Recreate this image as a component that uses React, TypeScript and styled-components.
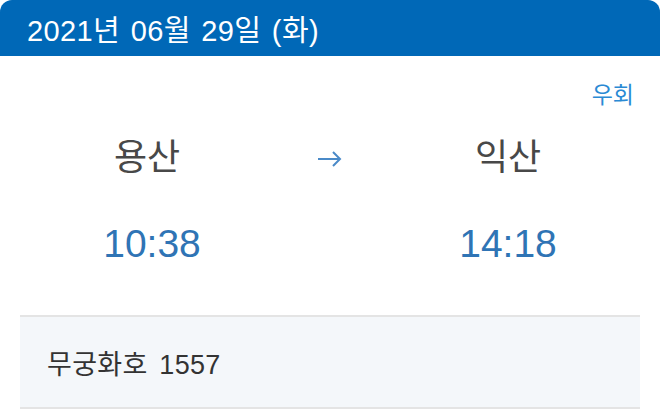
import styled, { createGlobalStyle } from 'styled-components';

const GlobalStyle = createGlobalStyle`
    html, body {
        margin: 0;
        padding: 0;
        background: #ffffff;
    }
    body {
        font-family: 'Liberation Sans', 'Noto Sans CJK KR', sans-serif;
    }
`;

const Card = styled.div`
    width: 660px;
    height: 410px;
    background: #ffffff;
    overflow: hidden;
`;

const DateBar = styled.div`
    height: 56px;
    background-color: #0068b7;
    border-radius: 12px 12px 0 0;
    display: flex;
    align-items: center;
    padding: 0 27px;
    color: #ffffff;
    font-size: 29px;
    letter-spacing: 0.4px;
    word-spacing: 2px;
`;

const Body = styled.div`
    padding: 0 20px;
`;

const DetourRow = styled.div`
    display: flex;
    justify-content: flex-end;
    padding: 22px 6px 0 0;
    height: 30px;
    font-family: 'Noto Sans CJK KR', sans-serif;
    font-size: 23px;
    line-height: 30px;
    color: #2a8ad4;
`;

const Route = styled.div`
    display: grid;
    grid-template-columns: 1fr 92px 1fr;
    grid-template-rows: 60px 118px;
    align-items: center;
    justify-items: center;
    margin-top: 16px;
`;

const Station = styled.div<{ $nudge?: number }>`
    font-family: 'Noto Sans CJK KR', sans-serif;
    font-size: 36px;
    color: #484848;
    line-height: 1;
    margin-right: ${(p) => p.$nudge ?? 0}px;
`;

const Time = styled.div<{ $col: number }>`
    grid-row: 2;
    grid-column: ${(p) => p.$col};
    font-size: 39px;
    color: #2f74b5;
    line-height: 1;
`;

const Arrow = styled.svg`
    width: 28px;
    height: 20px;
    margin-top: 10px;
`;

const TrainBox = styled.div`
    margin-top: 13px;
    height: 90px;
    background: #f4f7fa;
    border-top: 2px solid #e4e4e4;
    border-bottom: 2px solid #e4e4e4;
    display: flex;
    align-items: center;
    padding: 0 27px;
    font-size: 27px;
    letter-spacing: 0.3px;
    word-spacing: 4px;
    color: #333333;
`;

const App = () => {
    return (
        <Card>
            <GlobalStyle />
            <DateBar>2021년 06월 29일 (화)</DateBar>
            <Body>
                <DetourRow>우회</DetourRow>
                <Route>
                    <Station $nudge={10}>용산</Station>
                    <Arrow viewBox='0 0 28 20'>
                        <path d='M2 10 H24 M17 3 L24 10 L17 17' fill='none' stroke='#4a8ac8' strokeWidth='2' />
                    </Arrow>
                    <Station>익산</Station>
                    <Time $col={1}>10:38</Time>
                    <Time $col={3}>14:18</Time>
                </Route>
                <TrainBox>무궁화호 1557</TrainBox>
            </Body>
        </Card>
    );
};

export default App;
